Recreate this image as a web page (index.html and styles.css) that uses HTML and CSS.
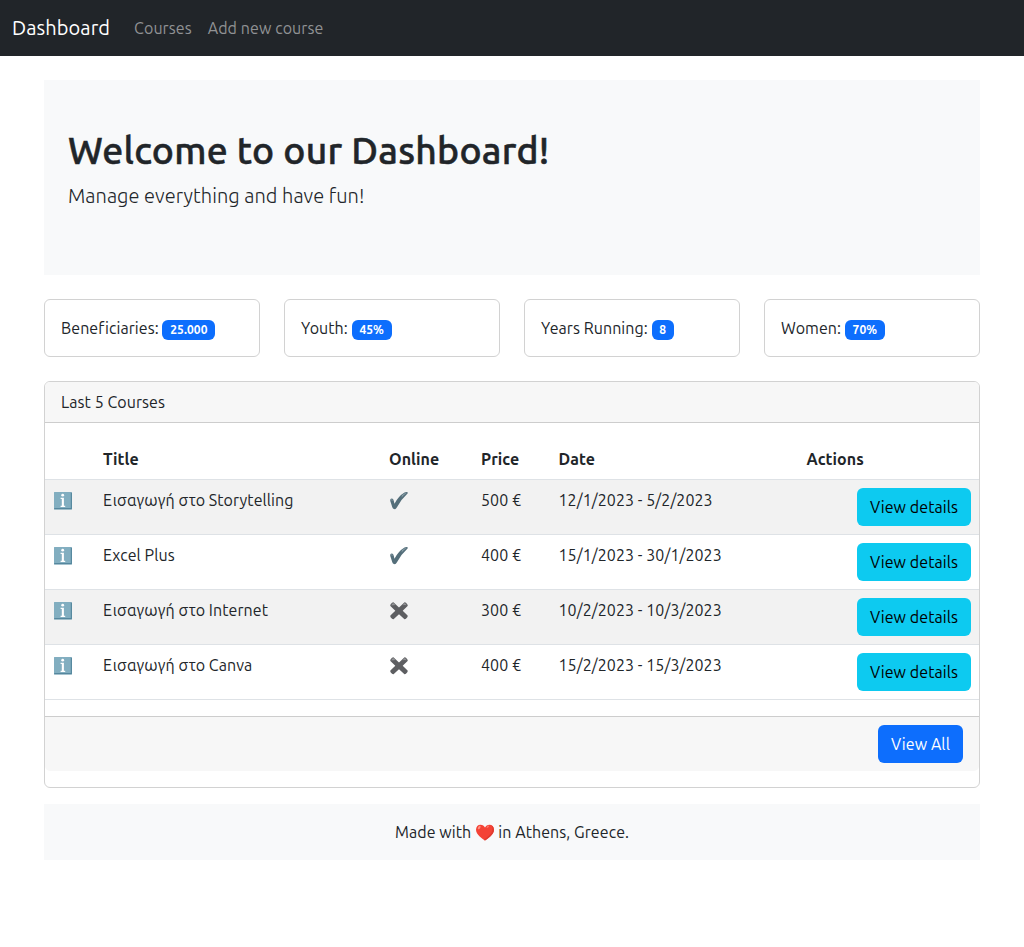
FILE: index.html
```html
<!DOCTYPE html>
<html lang="en">
<head>
<meta charset="utf-8">
<title>Dashboard</title>
<link rel="stylesheet" href="styles.css">
</head>
<body>
<svg class="sprite" aria-hidden="true">
  <symbol id="info" viewBox="0 0 20 20">
    <rect x="1" y="1.5" width="18" height="17" rx=".6" fill="#5f93a9"/>
    <rect x="1" y="1" width="17.4" height="16.600" rx=".6" fill="#82aec0"/>
    <path d="M18.300 1.600V17.600H1.400" fill="none" stroke="#4f8198" stroke-width=".9"/>
    <circle cx="9.700" cy="4.200" r="1.400" fill="#fff"/>
    <path d="M7.600 6.800h3.300v7.900h1.300v1.300H7.600v-1.300h1.200V8.100H7.600z" fill="#fff"/>
  </symbol>
  <symbol id="check" viewBox="0 0 20 20">
    <path d="M1.200 9.800Q1 7.600 2.800 7.600Q4.200 7.500 4.600 9.200L5.500 12.700Q9.500 5.200 15.500 1.600Q17 .7 18.500 1.200Q19.400 1.700 18.300 2.800Q12 8.500 7.800 16.500Q6.700 18.700 5 18.100Q3.800 17.800 3.300 16.300Z" fill="#546e7a"/>
    <path d="M13 4.300Q15.500 2 18 1.700Q15 3.500 12.500 6.500Z" fill="#8da2ab"/>
    <path d="M2 9Q2.500 8 3.300 8.400L3.600 10Z" fill="#8da2ab"/>
  </symbol>
  <symbol id="cross" viewBox="0 0 20 20">
    <path d="M4.400 1.300L10 6.400L15.600 1.300Q16.600 1 18.600 3.700Q18.900 4.400 18.600 4.900L13.700 9.800L18.600 14.600Q19 15.400 18.300 16.300Q16.700 18.500 15.500 18.200L10 13.200L4.500 18.200Q3.300 18.500 1.600 16.200Q1 15.300 1.400 14.600L6.300 9.800L1.400 4.900Q1.100 4.200 1.500 3.600Q3.400 1 4.400 1.300Z" fill="#5d5e61"/>
    <path d="M4.300 2.100L6.500 4.100L4.300 4.300L2.300 4.500Q2.700 3.100 4.300 2.100M15.700 2.100L13.500 4.300L15.200 4.100L17.700 4.300Q17 3 15.700 2.100" fill="#919295"/>
  </symbol>
  <symbol id="heart" viewBox="0 0 20 20">
    <path d="M10 17.600C7.200 15.300 1 11.600 1 6.700C1 3.600 3 1.700 5.500 1.700C7.600 1.700 9.200 2.800 10 4.500C10.800 2.800 12.400 1.700 14.500 1.700C17 1.700 19 3.600 19 6.700C19 11.600 12.800 15.300 10 17.600Z" fill="#f44336"/>
    <path d="M16.300 2.300Q18 4.300 17.100 8.100C16 11.600 12 14.200 9.200 16.900L10 17.600C12.800 15.300 19 11.600 19 6.700Q19 3.500 16.300 2.300Z" fill="#df3c30"/>
    <ellipse cx="4.200" cy="4.600" rx="1.100" ry="1.900" transform="rotate(35 4.200 4.600)" fill="#ff8f80"/>
    <ellipse cx="12.800" cy="3.800" rx=".8" ry="1.500" transform="rotate(45 12.800 3.800)" fill="#ff7769"/>
  </symbol>
</svg>
<nav class="navbar">
  <a class="brand">Dashboard</a>
  <a class="nav-link">Courses</a>
  <a class="nav-link">Add new course</a>
</nav>
<main class="container">
  <header class="hero">
    <h1>Welcome to our Dashboard!</h1>
    <p>Manage everything and have fun!</p>
  </header>
  <section class="stats">
    <div class="stat">Beneficiaries: <span class="badge">25.000</span></div>
    <div class="stat">Youth: <span class="badge">45%</span></div>
    <div class="stat">Years Running: <span class="badge">8</span></div>
    <div class="stat">Women: <span class="badge">70%</span></div>
  </section>
  <section class="card">
    <div class="card-header">Last 5 Courses</div>
    <table class="courses">
      <colgroup><col class="c-icon"><col class="c-title"><col class="c-online"><col class="c-price"><col class="c-date"><col></colgroup>
      <thead><tr><th></th><th>Title</th><th>Online</th><th>Price</th><th>Date</th><th>Actions</th></tr></thead>
      <tbody>
        <tr><td><svg class="icon"><use href="#info"/></svg></td><td>Εισαγωγή στο Storytelling</td><td><svg class="icon"><use href="#check"/></svg></td><td>500 €</td><td>12/1/2023 - 5/2/2023</td><td class="action"><a class="btn btn-info">View details</a></td></tr>
        <tr><td><svg class="icon"><use href="#info"/></svg></td><td>Excel Plus</td><td><svg class="icon"><use href="#check"/></svg></td><td>400 €</td><td>15/1/2023 - 30/1/2023</td><td class="action"><a class="btn btn-info">View details</a></td></tr>
        <tr><td><svg class="icon"><use href="#info"/></svg></td><td>Εισαγωγή στο Internet</td><td><svg class="icon"><use href="#cross"/></svg></td><td>300 €</td><td>10/2/2023 - 10/3/2023</td><td class="action"><a class="btn btn-info">View details</a></td></tr>
        <tr><td><svg class="icon"><use href="#info"/></svg></td><td>Εισαγωγή στο Canva</td><td><svg class="icon"><use href="#cross"/></svg></td><td>400 €</td><td>15/2/2023 - 15/3/2023</td><td class="action"><a class="btn btn-info">View details</a></td></tr>
      </tbody>
    </table>
    <div class="card-footer"><a class="btn btn-primary">View All</a></div>
  </section>
  <footer class="footer"><span>Made with</span><svg class="icon"><use href="#heart"/></svg><span>in Athens, Greece.</span></footer>
</main>
</body>
</html>
```
FILE: styles.css
```css
* { box-sizing: border-box; }
body {
  margin: 0;
  font: 400 16px/24px Ubuntu, "Noto Sans", sans-serif;
  letter-spacing: .07px;
  color: #212529;
  background: #fff;
}
.sprite { display: none; }
.icon { display: block; width: 20px; height: 20px; margin-top: 3px; }
.navbar {
  display: flex;
  align-items: center;
  height: 56px;
  padding: 0 12px;
  background: #212529;
  white-space: nowrap;
}
.brand { margin-right: 16px; font-size: 20px; line-height: 30px; color: #fff; }
.nav-link { padding: 8px; color: #909294; letter-spacing: .08px; }
.container { width: 960px; margin: 24px auto 0; padding: 0 12px; }
.hero { height: 194.830px; padding: 48px 24px; background: #f8f9fa; }
.hero h1 {
  margin: 0 0 8px;
  font-size: 37.360px;
  line-height: 1.2;
  font-weight: 500;
  letter-spacing: .23px;
  -webkit-text-stroke: .5px #212529;
}
.hero p { margin: 0; font-size: 20px; line-height: 30px; font-weight: 300; letter-spacing: .04px; }
.stats { display: grid; grid-template-columns: repeat(4, 1fr); gap: 24px; margin: 24px 0; }
.stat {
  height: 58px;
  padding: 16px;
  border: 1px solid #d2d2d2;
  border-radius: 6px;
  white-space: nowrap;
}
.badge {
  display: inline-block;
  padding: .35em .65em;
  border-radius: 6px;
  background: #0d6efd;
  color: #fff;
  font-size: 12px;
  font-weight: 700;
  line-height: 1;
  text-align: center;
  vertical-align: baseline;
}
.card { padding-bottom: 16px; border: 1px solid #d2d2d2; border-radius: 6px; }
.card-header {
  height: 41px;
  padding: 8px 16px;
  border-bottom: 1px solid #cdcdcd;
  border-radius: 5px 5px 0 0;
  background: #f7f7f7;
}
.courses { width: 100%; margin: 16px 0; table-layout: fixed; border-collapse: separate; border-spacing: 0; }
.c-icon { width: 50px; }
.c-title { width: 286px; }
.c-online { width: 92px; }
.c-price { width: 77.500px; }
.c-date { width: 248px; }
.courses th, .courses td { padding: 8px; border-bottom: 1px solid #dee2e6; text-align: left; vertical-align: top; white-space: nowrap; }
.courses th { height: 41px; font-weight: 700; }
.courses td { height: 55px; }
.courses tbody tr:nth-child(odd) td { background: #f2f2f2; }
.courses .action { text-align: right; }
.btn { display: block; height: 38px; margin-left: auto; border-radius: 6px; line-height: 38px; text-align: center; }
.btn-info { width: 114px; background: #0dcaf0; color: #000; }
.btn-primary { width: 85px; background: #0d6efd; color: #fff; }
.card-footer { height: 55px; padding: 8px 16px; border-top: 1px solid #cdcdcd; border-radius: 0 0 5px 5px; background: #f7f7f7; }
.footer { display: flex; justify-content: center; gap: 4px; height: 56px; margin-top: 16px; padding: 16px; background: #f8f9fa; }
.footer .icon { margin-right: -1px; }
```
